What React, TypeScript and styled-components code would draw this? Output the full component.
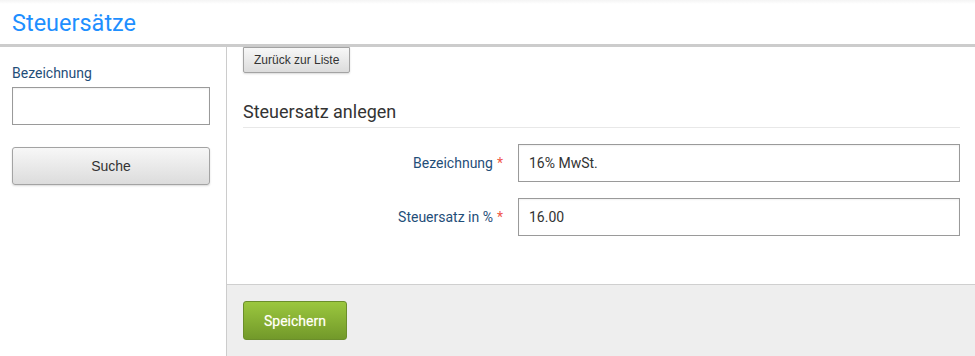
import React, { FC } from 'react';
import styled, { createGlobalStyle } from 'styled-components';

const GlobalStyle = createGlobalStyle`
  html, body {
    margin: 0;
    padding: 0;
    background: #fff;
    font-family: Roboto, "Liberation Sans", Arial, sans-serif;
  }
  * { box-sizing: border-box; }
`;

const Page = styled.div`
  display: flex;
  flex-direction: column;
  min-height: 356px;
`;

const Header = styled.header`
  height: 47px;
  padding: 0 12px;
  display: flex;
  align-items: center;
  border-bottom: 3px solid #cccccc;
  background: linear-gradient(to bottom, #f4f4f4 0px, #ffffff 4px);
`;

const Title = styled.h1`
  margin: 0;
  padding-top: 1px;
  font-size: 23.5px;
  font-weight: 400;
  color: #1e8fff;
`;

const Body = styled.div`
  flex: 1;
  display: flex;
`;

const Sidebar = styled.aside`
  width: 227px;
  flex-shrink: 0;
  padding: 16px 16px 0 12px;
  border-right: 1px solid #cccccc;
`;

const SideLabel = styled.label`
  display: block;
  font-size: 14px;
  line-height: 20px;
  color: #1f4e79;
  margin-bottom: 4px;
`;

const TextInput = styled.input<{ $width?: string }>`
  display: block;
  width: ${p => p.$width || '100%'};
  height: 38px;
  padding: 0 10px;
  border: 1px solid #9a9a9a;
  border-radius: 0;
  box-shadow: inset 0 1px 2px rgba(0, 0, 0, 0.06);
  font-family: Roboto, "Liberation Sans", Arial, sans-serif;
  font-size: 14px;
  color: #333;
  background: #fff;
  outline: none;
`;

const GreyButton = styled.button<{ $block?: boolean; $small?: boolean }>`
  display: block;
  width: ${p => (p.$block ? '100%' : 'auto')};
  height: ${p => (p.$small ? '26px' : '38px')};
  padding: ${p => (p.$small ? '0 10px' : '0 12px')};
  font-family: "Liberation Sans", Arial, sans-serif;
  font-size: ${p => (p.$small ? '12px' : '14px')};
  color: #333;
  background: linear-gradient(to bottom, #f7f7f7, #dcdcdc);
  border: 1px solid #a3a3a3;
  border-radius: ${p => (p.$small ? '0 0 2px 2px' : '3px')};
  box-shadow: 0 1px 2px rgba(0, 0, 0, 0.15);
  cursor: pointer;
`;

const SearchButton = styled(GreyButton)`
  margin-top: 22px;
`;

const Main = styled.main`
  flex: 1;
  display: flex;
  flex-direction: column;
`;

const Content = styled.div`
  padding: 0 15px 48px 16px;
`;

const SectionTitle = styled.h2`
  margin: 27px 0 0;
  padding-bottom: 3px;
  font-size: 18px;
  line-height: 24px;
  font-weight: 400;
  color: #333;
  border-bottom: 1px solid #e8e8e8;
`;

const Form = styled.div`
  display: grid;
  grid-template-columns: 260px 1fr;
  column-gap: 15px;
  row-gap: 16px;
  padding-top: 16px;
  align-items: center;
`;

const FieldLabel = styled.label`
  text-align: right;
  font-size: 14px;
  color: #1f4e79;
`;

const Required = styled.span`
  color: #f0584a;
  margin-left: 4px;
`;

const Footer = styled.div`
  flex: 1;
  background: #eeeeee;
  border-top: 1px solid #cfcfcf;
  padding: 16px 16px;
`;

const SaveButton = styled.button`
  width: 104px;
  height: 39px;
  font-family: Roboto, "Liberation Sans", Arial, sans-serif;
  font-size: 14px;
  color: #fff;
  text-shadow: 0 0 1px rgba(255, 255, 180, 0.6);
  background: linear-gradient(to bottom, #9bc73e, #72992a);
  border: 1px solid #6b8e2b;
  border-radius: 3px;
  cursor: pointer;
`;

const fields = [
  { label: 'Bezeichnung', value: '16% MwSt.' },
  { label: 'Steuersatz in %', value: '16.00' },
];

const App: FC = () => {
  return (
    <Page>
      <GlobalStyle />
      <Header>
        <Title>Steuersätze</Title>
      </Header>
      <Body>
        <Sidebar>
          <SideLabel>Bezeichnung</SideLabel>
          <TextInput />
          <SearchButton $block>Suche</SearchButton>
        </Sidebar>
        <Main>
          <Content>
            <GreyButton $small>Zurück zur Liste</GreyButton>
            <SectionTitle>Steuersatz anlegen</SectionTitle>
            <Form>
              {fields.map(f => (
                <React.Fragment key={f.label}>
                  <FieldLabel>
                    {f.label}
                    <Required>*</Required>
                  </FieldLabel>
                  <TextInput defaultValue={f.value} />
                </React.Fragment>
              ))}
            </Form>
          </Content>
          <Footer>
            <SaveButton>Speichern</SaveButton>
          </Footer>
        </Main>
      </Body>
    </Page>
  );
};

export default App;
